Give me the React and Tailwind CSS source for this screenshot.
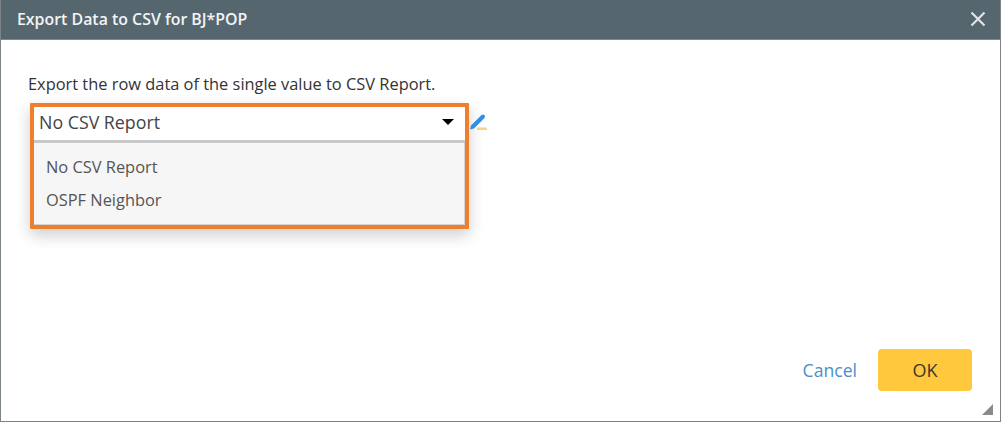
import React from 'react';

const font = { fontFamily: '"Open Sans", sans-serif' };

const PencilIcon = () => (
  <svg width="19" height="19" viewBox="0 0 19 19" className="mt-[10px] shrink-0">
    <path d="M1 16.5 L2 12.5 L12.5 2 Q14 1 15.5 2 Q16.5 3.5 15.5 5 L5 15.5 Z" fill="#2f8fe8" />
    <rect x="8" y="14.5" width="10" height="2.5" fill="#f9cf8a" />
  </svg>
);

const App = () => {
  return (
    <div className="w-[1002px] h-[423px] bg-white overflow-hidden" style={font}>
      <div className="relative w-[1001px] h-[422px] flex flex-col border-l border-r border-b border-[#7d8488] bg-white">
        <div className="h-[40px] flex items-center justify-between bg-[#56666f] pl-[16px] pr-[14px] shrink-0 border-b border-[#7b8990]">
          <span className="text-[15.9px] font-semibold text-[#f2f4f5]">Export Data to CSV for BJ*POP</span>
          <svg width="16" height="16" viewBox="0 0 16 16" className="mt-[-1px]">
            <path d="M1.5 1.5 L14.5 14.5 M14.5 1.5 L1.5 14.5" stroke="#dfe4e6" strokeWidth="2.2" />
          </svg>
        </div>

        <div className="flex-1 flex flex-col pl-[27px] pr-[28px]">
          <p className="mt-[34px] text-[16.4px] leading-[20px] text-[#333333]">
            Export the row data of the single value to CSV Report.
          </p>
          <div className="mt-[9px] ml-[2px] flex items-start">
            <div className="w-[439px] h-[126px] border-[4px] border-[#f07f2d] rounded-[1px] shadow-[0_6px_16px_rgba(0,0,0,0.2)] flex flex-col">
              <div className="h-[36px] flex items-center justify-between pl-[5px] pr-[11px] bg-white border-b-[3px] border-[#c8c8c8]">
                <span className="text-[17.8px] text-[#444444] mb-[2px]">No CSV Report</span>
                <span className="w-0 h-0 border-x-[6px] border-x-transparent border-t-[6px] border-t-black mb-[3px]"></span>
              </div>
              <div className="flex-1 bg-[#f6f6f6] border-r border-b border-[#d4d4d4] pl-[12px] pt-[7px] text-[16.4px] text-[#555555]">
                <div className="h-[33px] leading-[33px]">No CSV Report</div>
                <div className="h-[33px] leading-[33px]">OSPF Neighbor</div>
              </div>
            </div>
            <PencilIcon />
          </div>

          <div className="mt-auto mb-[30px] flex items-center justify-end gap-[21px]">
            <span className="text-[17.6px] text-[#4a8fc9]">Cancel</span>
            <button className="w-[94px] h-[42px] rounded-[4px] bg-[#ffc83d] text-[18px] text-[#3d3a2a]">OK</button>
          </div>
        </div>

        <svg width="11" height="11" viewBox="0 0 11 11" className="absolute right-[7px] bottom-[6px]">
          <path d="M11 0 L11 11 L0 11 Z" fill="#8a8a8a" />
        </svg>
      </div>
    </div>
  );
};

export default App;
